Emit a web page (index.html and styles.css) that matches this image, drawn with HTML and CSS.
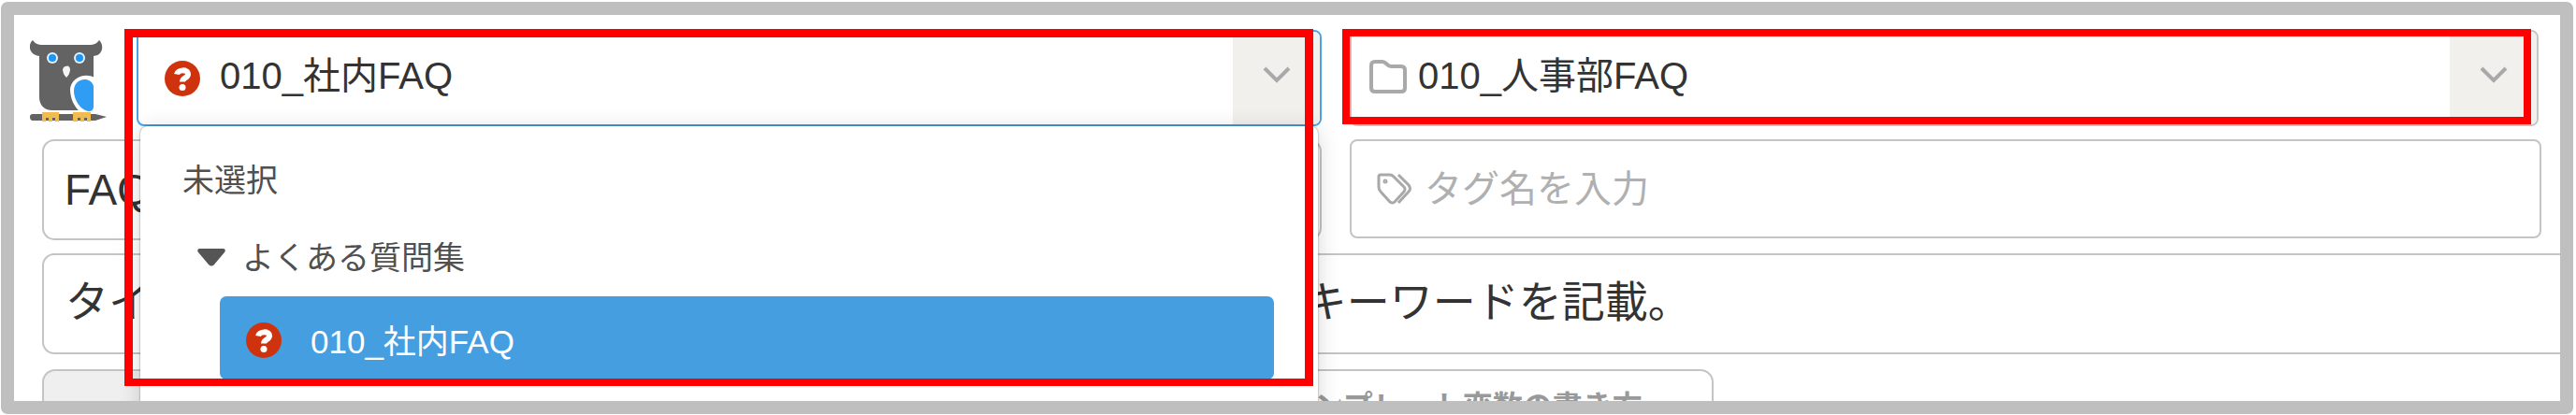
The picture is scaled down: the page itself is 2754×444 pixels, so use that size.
FILE: index.html
```html
<!DOCTYPE html>
<html lang="ja">
<head>
<meta charset="utf-8">
<title>FAQ</title>
<link rel="stylesheet" href="styles.css">
</head>
<body>
<main class="frame">
  <div class="row row-pickers">
    <svg class="owl" viewBox="0 0 82 88" aria-hidden="true">
      <path fill="#636363" d="M3 0C5 3 8 5 14 5H63C69 5 72 3 74 0C79 4 79 16 68 17V75H24C15 75 10 69 10 61V17C-2 15-2 4 3 0Z"/>
      <circle cx="24" cy="19" r="6" fill="#e6f2fb"/><circle cx="53" cy="19" r="6" fill="#e6f2fb"/>
      <circle cx="24" cy="19" r="4" fill="#1c96f5"/><circle cx="53" cy="19" r="4" fill="#1c96f5"/>
      <path fill="#f4f4f4" d="M38 28Q42 26 43 31Q43 36 39 40Q35 36 35 31Q36 28 38 28Z"/>
      <path fill="#fff" d="M69 40C59 34 44 40 43 52C43 62 47 71 53 76H69Z"/>
      <path fill="#2f9df4" d="M68 49C65 38 47 40 47 54C47 64 54 75 63 76Q68 76 68 71Z"/>
      <path fill="#636363" d="M3 79H70L82 82L70 86H3Q0 86 0 82Q0 79 3 79Z"/>
      <path fill="#f2bb50" d="M13 77H31V87H27V83H24V87H20V83H17V87H13ZM46 77H65V87H61V83H58V87H54V83H51V87H46Z"/>
    </svg>
    <div class="picker">
      <div class="combo combo-open">
        <svg class="help" viewBox="0 0 38 38" aria-hidden="true"><circle cx="19" cy="19" r="19" fill="#ce330e"/><path d="M13 14.500C14 9.500 25 8.500 25 14.500C25 18.500 19 18 19 22.500" fill="none" stroke="#fff" stroke-width="6"/><circle cx="19" cy="28.500" r="3.500" fill="#fff"/></svg>
        <select aria-label="FAQ集"><option>010_社内FAQ</option></select>
        <span class="arrow"><svg viewBox="0 0 30 18" aria-hidden="true"><path d="M2 2L15 15L28 2"/></svg></span>
      </div>
      <div class="menu">
        <div class="menu-none">未選択</div>
        <div class="menu-group">
          <svg class="caret" viewBox="0 0 30 20" aria-hidden="true"><path d="M2 0H28Q31 1 29 4L18 17Q15 20 12 17L1 4Q-1 1 2 0Z" fill="#555"/></svg>
          <span>よくある質問集</span>
        </div>
        <button class="menu-item" type="button">
          <svg class="help" viewBox="0 0 38 38" aria-hidden="true"><circle cx="19" cy="19" r="19" fill="#ce330e"/><path d="M13 14.500C14 9.500 25 8.500 25 14.500C25 18.500 19 18 19 22.500" fill="none" stroke="#fff" stroke-width="6"/><circle cx="19" cy="28.500" r="3.500" fill="#fff"/></svg>
          <span>010_社内FAQ</span>
        </button>
      </div>
      <div class="mark mark-menu"></div>
    </div>
    <div class="picker">
      <div class="combo combo-folder">
        <svg class="folder" viewBox="0 0 40 36" aria-hidden="true"><path d="M6 2H14C18 2 19 7 23 7H34Q38 7 38 11V30Q38 34 34 34H6Q2 34 2 30V6Q2 2 6 2Z"/></svg>
        <select aria-label="フォルダ"><option>010_人事部FAQ</option></select>
        <span class="arrow"><svg viewBox="0 0 30 18" aria-hidden="true"><path d="M2 2L15 15L28 2"/></svg></span>
      </div>
      <div class="mark mark-combo"></div>
    </div>
  </div>

  <div class="row row-fields">
    <input class="field" type="text" value="FAQ" aria-label="FAQ">
    <label class="tags">
      <svg class="tag" viewBox="0 0 38 34" aria-hidden="true"><path d="M4 2H14Q16 2 18 4L29 15Q31 17 29 20L19 31Q17 33 14 31L4 20Q2 18 2 15V4Q2 2 4 2Z"/><path d="M23 2L34 13Q37 17 34 20L23 32"/><circle cx="9" cy="9" r="1"/></svg>
      <input type="text" placeholder="タグ名を入力" aria-label="タグ">
    </label>
  </div>

  <div class="title">
    <input type="text" value="タイ" aria-label="タイトル">
    <input type="text" value="キーワードを記載。" aria-label="キーワード">
  </div>

  <div class="tools">
    <button class="tool tool-gray" type="button" aria-label="編集"></button>
    <button class="tool tool-template" type="button">テンプレート変数の書き方</button>
  </div>
</main>
</body>
</html>
```
FILE: styles.css
```css
* { box-sizing: border-box; }

body {
  margin: 0;
  padding: 2px 3px 1px 1px;
  background: #fff;
  color: #333;
  font-family: "Liberation Sans", "Noto Sans CJK JP", sans-serif;
  font-size: 40px;
  overflow: hidden;
}

input, select, button { font: inherit; color: inherit; margin: 0; }

.frame {
  height: calc(100vh - 3px);
  padding-top: 16px;
  border: 14px solid #bfbfbf;
  border-radius: 7px;
  overflow: hidden;
}

.row { display: grid; align-items: start; column-gap: 30px; }

.row-pickers {
  grid-template-columns: 84px 1267fr 1271fr;
  padding: 0 23px 0 17px;
}

.owl { width: 82px; height: 88px; margin-top: 11px; }

.picker { position: relative; }

.combo {
  display: flex;
  align-items: center;
  height: 103px;
  border: 2px solid #c4c4c4;
  border-radius: 8px;
  background: #fff;
  overflow: hidden;
}

.combo-open { gap: 21px; padding-left: 28px; border-color: #4aa3e4; }
.combo-folder { gap: 12px; padding-left: 19px; }

.combo select {
  flex: 1;
  min-width: 0;
  height: 64px;
  padding: 0 0 5px;
  border: 0;
  background: none;
  appearance: none;
}

.help { flex: none; width: 38px; height: 38px; }
.folder { flex: none; width: 40px; height: 36px; margin-bottom: 4px; }
.folder, .tag, .arrow svg { fill: none; stroke: #a9a9a9; stroke-width: 4; }

.arrow {
  display: flex;
  align-items: center;
  justify-content: center;
  align-self: stretch;
  width: 93px;
  padding-bottom: 8px;
  background: #f1f0ec;
}
.arrow svg { width: 30px; height: 18px; }

.menu {
  position: absolute;
  z-index: 1;
  top: 103px;
  left: 4px;
  right: 4px;
  height: 400px;
  padding: 34px 47px 0 45px;
  border-radius: 8px;
  background: #fff;
  box-shadow: 0 4px 24px rgba(0, 0, 0, 0.16), 0 0 2px rgba(0, 0, 0, 0.5);
  color: #505050;
  font-size: 34px;
  line-height: 48px;
}

.menu-group {
  display: flex;
  align-items: center;
  gap: 18px;
  margin: 35px 0 17px;
  padding-left: 16px;
}
.caret { width: 30px; height: 20px; }

.menu-item {
  display: flex;
  align-items: center;
  gap: 31px;
  width: calc(100% - 40px);
  height: 89px;
  margin-left: 40px;
  padding: 4px 28px 0;
  border: 0;
  border-radius: 7px;
  background: #459ee0;
  color: #fff;
  font-size: 35px;
}
.menu-item span { padding-top: 4px; }

.mark { position: absolute; z-index: 2; border: 8px solid #f00; pointer-events: none; }
.mark-menu { top: -1px; left: -13px; right: 9px; height: 382px; border-width: 9px 9px 8px; }
.mark-combo { top: -1px; left: -8px; right: 8px; bottom: 2px; }

.row-fields {
  grid-template-columns: 1368fr 1274fr;
  margin-top: 14px;
  padding: 0 20px 0 30px;
}

.field {
  width: 100%;
  height: 108px;
  padding: 0 22px;
  border: 2px solid #c4c4c4;
  border-radius: 13px;
  font-size: 46px;
}

.tags {
  display: flex;
  align-items: center;
  gap: 13px;
  height: 106px;
  padding-left: 27px;
  border: 2px solid #c4c4c4;
  border-radius: 8px;
}
.tag { flex: none; width: 38px; height: 34px; stroke-width: 3; }
.tags input { flex: 1; min-width: 0; height: 64px; padding: 0; border: 0; background: none; }
.tags input::placeholder { color: #b0b0b0; opacity: 1; }

.title {
  display: grid;
  grid-template-columns: 49% 1fr;
  column-gap: 8px;
  height: 108px;
  margin: 14px -20px 0 30px;
  padding: 0 0 12px 23px;
  border: 2px solid #c4c4c4;
  border-radius: 13px;
  font-size: 46px;
}
.title input { min-width: 0; padding: 0; border: 0; background: none; }

.tools {
  display: grid;
  grid-template-columns: 46% 536px;
  column-gap: 13px;
  margin: 16px 0 0 30px;
}
.tool {
  height: 74px;
  border: 2px solid #c4c4c4;
  border-radius: 14px;
  background: #fff;
  color: #999;
  font-size: 32px;
  font-weight: bold;
}
.tool-gray { background: #efefef; }
```
